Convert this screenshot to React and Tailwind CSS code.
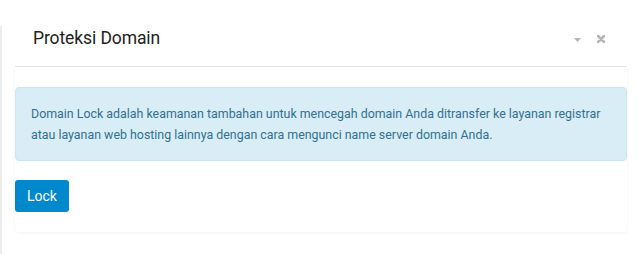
import React from 'react';

const App = () => {
  return (
    <div className="relative w-[640px] h-[254px] bg-white overflow-hidden" style={{ fontFamily: 'Roboto, "Liberation Sans", sans-serif' }}>
      {/* left edge of the neighbouring column */}
      <div className="absolute left-0 top-[26px] bottom-0 w-[2px] bg-[#ececec]" />

      <div className="ml-[15px] mt-[12px] w-[612px]">
        {/* Header */}
        <div className="h-[55px] flex items-center justify-between pl-[18px] pr-[22px] border-b border-[#e6e6e6]">
          <h2 className="text-[17.5px] text-[#222] font-normal leading-none tracking-[-0.1px]">Proteksi Domain</h2>
          <div className="flex items-center gap-[16px]">
            <svg width="7" height="4" viewBox="0 0 7 4" className="mt-[1px]">
              <path d="M0 0 H7 L3.5 4 Z" fill="#b5b5b5" />
            </svg>
            <svg width="8" height="8" viewBox="0 0 8 8">
              <path d="M1 1 L7 7 M7 1 L1 7" stroke="#b5b5b5" strokeWidth="2.6" strokeLinecap="round" />
            </svg>
          </div>
        </div>

        {/* Body */}
        <div className="pt-[20px] pb-[20px] rounded-b-[4px] shadow-[0_1px_3px_rgba(0,0,0,0.06)]">
          <div className="bg-[#d9edf7] border border-[#cde7f2] rounded-[4px] px-[15px] py-[15px] text-[12.4px] leading-[21px] text-[#31708f]">
            Domain Lock adalah keamanan tambahan untuk mencegah domain Anda ditransfer ke layanan registrar atau layanan web hosting lainnya dengan cara mengunci name server domain Anda.
          </div>
          <button className="mt-[19px] h-[32px] w-[54px] rounded-[3px] bg-[#0088cc] text-white text-[14px] leading-none">
            Lock
          </button>
        </div>
      </div>
    </div>
  );
};

export default App;
